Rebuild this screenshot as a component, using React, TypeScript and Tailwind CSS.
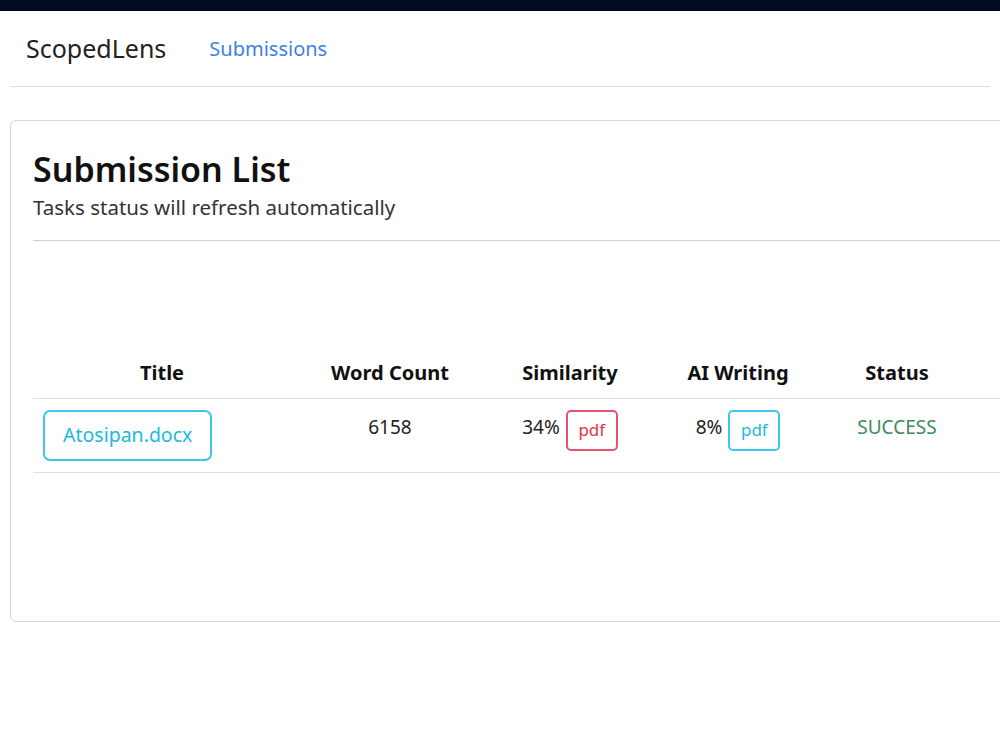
export default function App() {
  return (
    <div className="w-full min-h-[750px] bg-white overflow-hidden font-['Noto_Sans',sans-serif] text-[#212529]">
      {/* top bar */}
      <div className="h-[11px] bg-[#020b24]" />

      {/* Navbar */}
      <nav className="mx-[10px] h-[76px] border-b border-[#dcdcdc] flex items-center pl-4">
        <span className="text-[25px] text-[#222] leading-none">ScopedLens</span>
        <a className="ml-[43px] text-[20px] text-[#3f7fe6] leading-none">Submissions</a>
      </nav>

      {/* Card */}
      <div className="ml-[10px] mr-[-20px] mt-[33px] h-[502px] border border-[#d6d6d6] rounded-md">
        <div className="pl-[22px]">
          <h1 className="pt-[26px] text-[34px] font-semibold leading-[44px] text-[#111]">Submission List</h1>
          <p className="mt-[3px] text-[20.5px] leading-[26px] text-[#333]">Tasks status will refresh automatically</p>
          <div className="mt-[20px] border-t border-[#cfcfcf]" />

          <table className="mt-[112px] border-collapse table-fixed w-[1000px]">
            <thead>
              <tr className="border-b border-[#dedede]">
                <th className="w-[258px] h-[45px] pb-[4px] text-[20px] font-bold text-center align-middle text-[#111]">Title</th>
                <th className="w-[198px] pb-[4px] text-[20px] font-bold text-center align-middle text-[#111]">Word Count</th>
                <th className="w-[162px] pb-[4px] text-[20px] font-bold text-center align-middle text-[#111]">Similarity</th>
                <th className="w-[174px] pb-[4px] text-[20px] font-bold text-center align-middle text-[#111]">AI Writing</th>
                <th className="w-[144px] pb-[4px] text-[20px] font-bold text-center align-middle text-[#111]">Status</th>
                <th />
              </tr>
            </thead>
            <tbody>
              <tr className="border-b border-[#dedede]">
                <td className="pl-[10px] pt-[11px] pb-[11px] align-top">
                  <button className="h-[51px] px-[18px] border-2 border-[#3cc8e8] rounded-[7px] text-[19.5px] text-[#22b8dc]">
                    Atosipan.docx
                  </button>
                </td>
                <td className="pt-[14px] align-top text-center text-[19px] text-[#222]">6158</td>
                <td className="pt-[11px] align-top text-center">
                  <span className="inline-flex items-start gap-[6px]">
                    <span className="pt-[3px] text-[19px] text-[#222]">34%</span>
                    <span className="h-[41px] w-[52px] border-2 border-[#e0566a] rounded-[5px] text-[17px] text-[#dc3545] flex items-center justify-center">pdf</span>
                  </span>
                </td>
                <td className="pt-[11px] align-top text-center">
                  <span className="inline-flex items-start gap-[6px]">
                    <span className="pt-[3px] text-[19px] text-[#222]">8%</span>
                    <span className="h-[41px] w-[52px] border-2 border-[#3cc8e8] rounded-[5px] text-[17px] text-[#22b8dc] flex items-center justify-center">pdf</span>
                  </span>
                </td>
                <td className="pt-[14px] align-top text-center text-[19px] text-[#3c8c5c]">SUCCESS</td>
                <td />
              </tr>
            </tbody>
          </table>
        </div>
      </div>
    </div>
  );
}
